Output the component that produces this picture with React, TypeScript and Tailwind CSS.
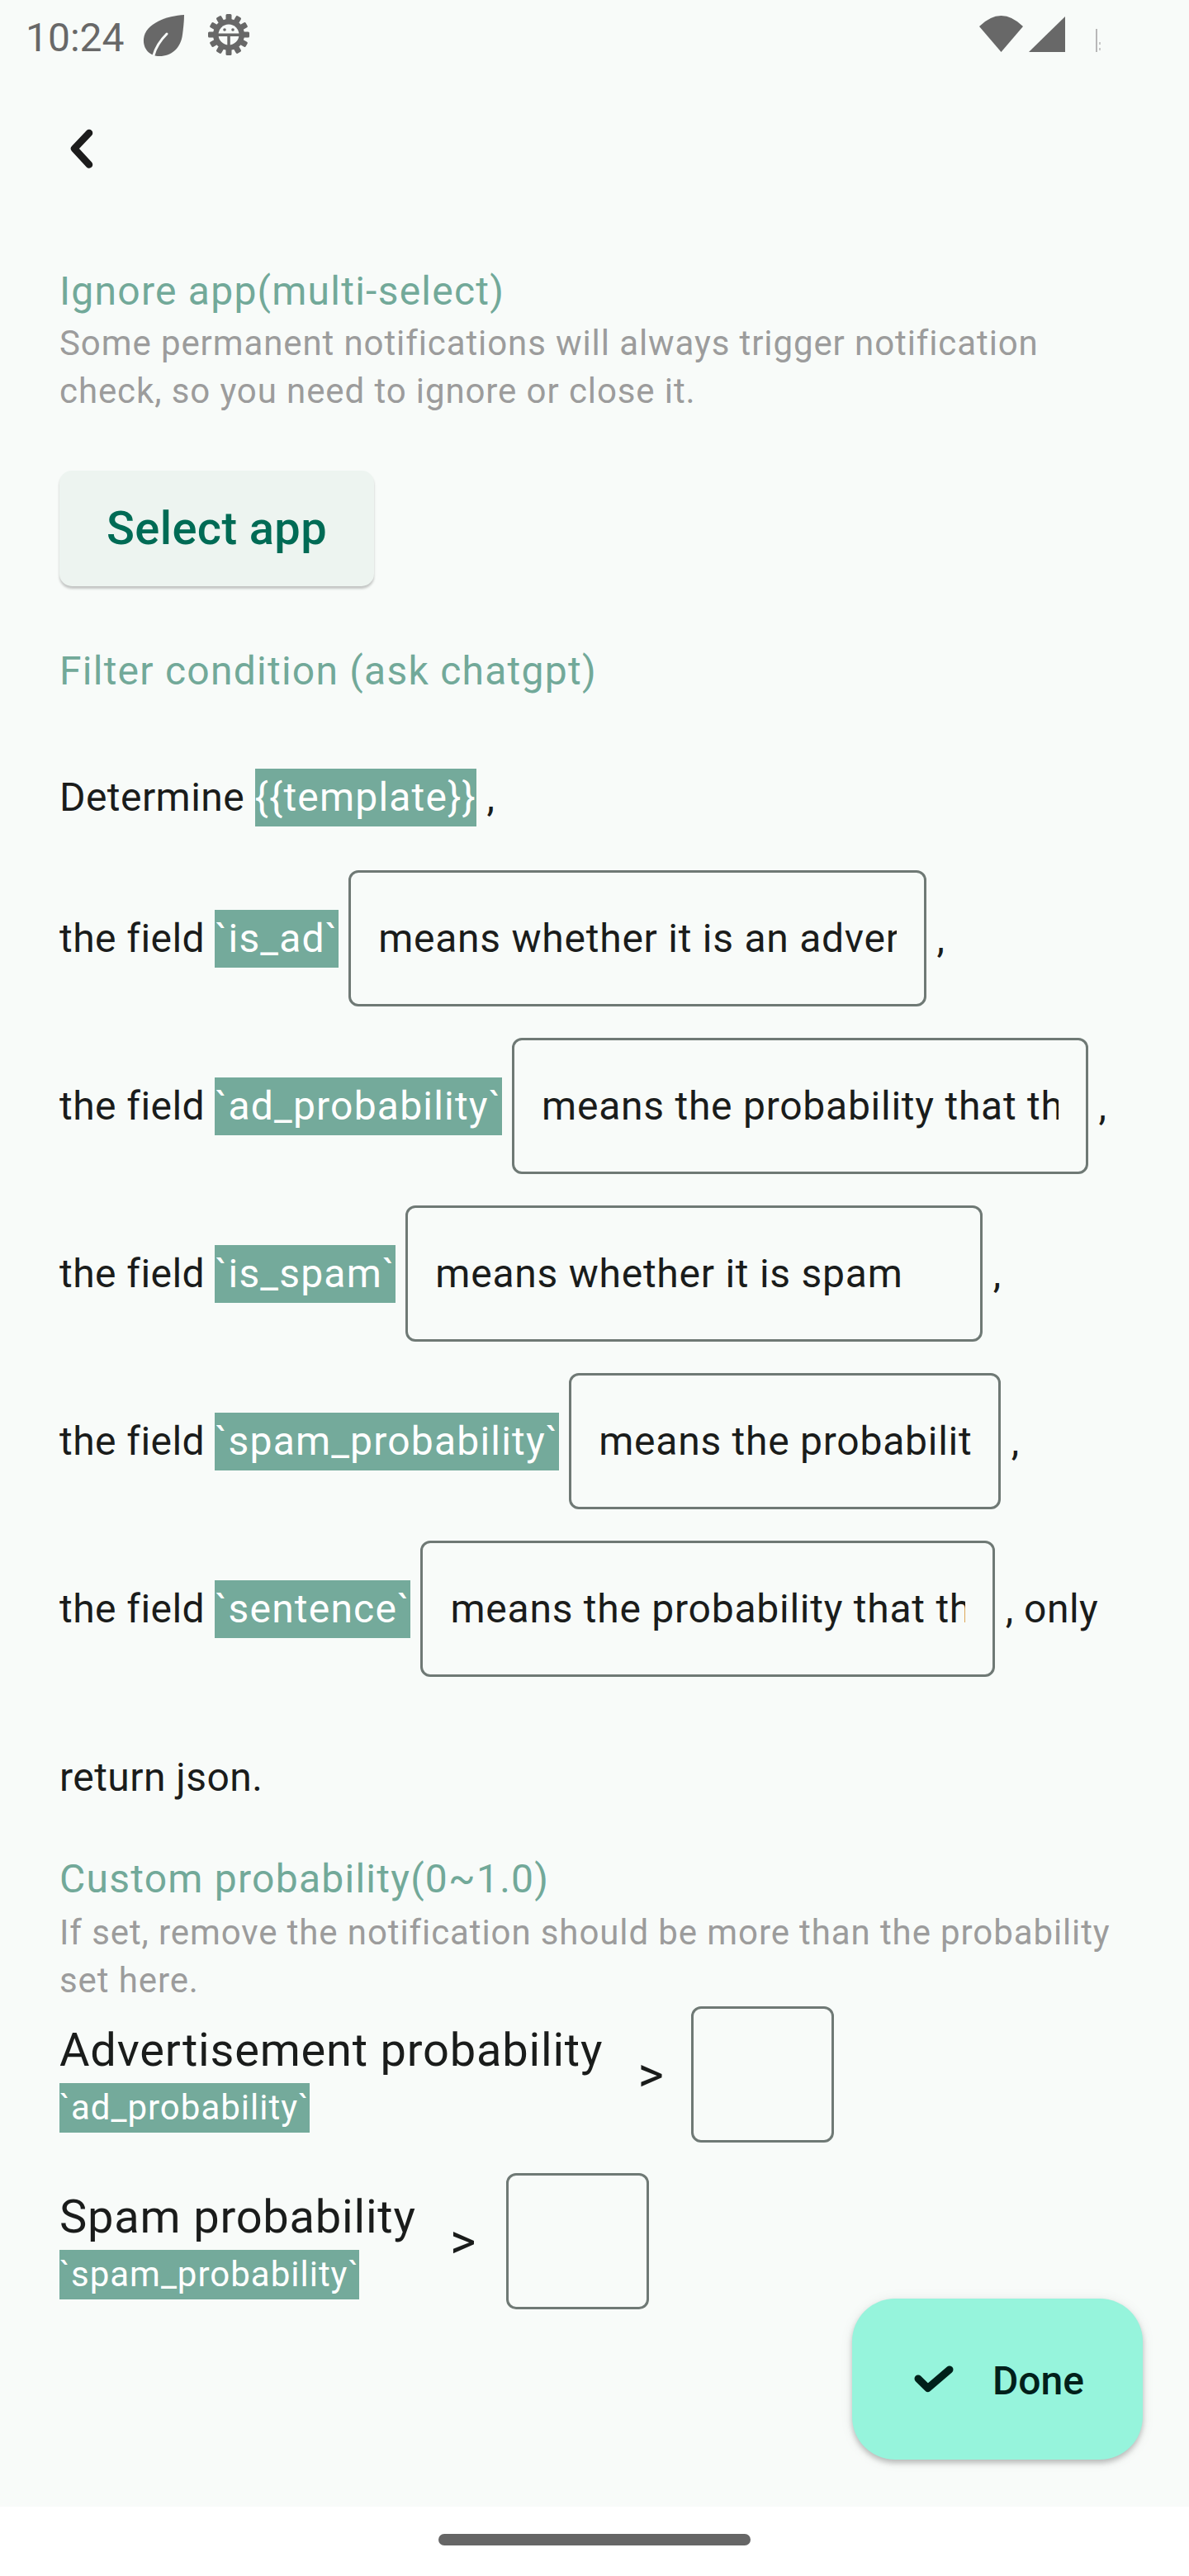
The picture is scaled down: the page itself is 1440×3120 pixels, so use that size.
import React from "react";

// Filter settings screen: ignore apps + chatgpt filter prompt + probability thresholds

function Tag({ children, className = "" }: { children: React.ReactNode; className?: string }) {
  return <span className={`inline-block whitespace-pre bg-[#74aa9b] text-white ${className}`}>{children}</span>;
}

function StatusBar() {
  return (
    <div className="flex h-[96px] shrink-0 items-start px-[31px]">
      <span className="mt-[22px] text-[48px] leading-[48px] text-[#686868]">10:24</span>
      {/* leaf */}
      <svg className="ml-[22px] mt-[17px]" width="52" height="52" viewBox="0 0 52 52">
        <path d="M50 1 C30 2 3 11 1 30 C0 43 9 51 20 51 C35 51 46 41 48 25 C49 17 50 9 50 1 Z" fill="#686868" />
        <path d="M13 50 C16 39 22 31 29 24" stroke="#f8fbf9" strokeWidth="3" fill="none" strokeLinecap="round" />
      </svg>
      {/* debug gear */}
      <svg className="ml-[26px] mt-[16px]" width="52" height="52" viewBox="0 0 52 52">
        <g fill="#686868">
          {[0, 30, 60, 90, 120, 150, 180, 210, 240, 270, 300, 330].map((a) => (
            <rect key={a} x="22.5" y="1" width="7" height="10" rx="1.5" transform={`rotate(${a} 26 26)`} />
          ))}
          <circle cx="26" cy="26" r="19" />
        </g>
        <circle cx="26" cy="26" r="12.5" fill="#f8fbf9" />
        <rect x="13" y="24.5" width="26" height="3.5" fill="#686868" />
        <rect x="24.3" y="26" width="3.5" height="13" fill="#686868" />
        <circle cx="21" cy="20" r="1.8" fill="#686868" />
        <circle cx="31" cy="20" r="1.8" fill="#686868" />
      </svg>
      <div className="flex-1" />
      {/* wifi */}
      <svg className="mt-[16px]" width="58" height="50" viewBox="0 0 58 50">
        <path d="M2 16 Q28.5 -10 55 16 L28.5 47 Z" fill="#686868" />
      </svg>
      {/* signal */}
      <svg className="ml-[2px] mt-[18px]" width="48" height="48" viewBox="0 0 48 48">
        <path d="M2 45 L46 2 L46 45 Z" fill="#686868" />
      </svg>
      {/* battery, nearly empty */}
      <svg className="ml-[34px] mt-[33px]" width="16" height="32" viewBox="0 0 16 32">
        <rect x="1" y="2" width="2" height="28" fill="#b8b8b8" />
        <rect x="5" y="18" width="2" height="3" fill="#c8c8c8" />
        <rect x="5" y="25" width="2" height="3" fill="#c8c8c8" />
      </svg>
      <div className="w-[67px]" />
    </div>
  );
}

function FieldRow({
  field,
  text,
  boxWidth,
  tail,
  spacing,
}: {
  field: string;
  text: string;
  boxWidth: string;
  tail: string;
  spacing: string;
}) {
  return (
    <div className={`flex items-center text-[48px] tracking-[0.45px] text-[#1a1c1b] ${spacing}`}>
      <span className="whitespace-pre">the field </span>
      <Tag className="leading-[70px] tracking-[1.2px]">{field}</Tag>
      <span className="whitespace-pre"> </span>
      <div className={`flex h-[165px] shrink-0 items-center rounded-[12px] border-[3px] border-[#6f7975] px-[33px] ${boxWidth}`}>
        <div className="w-full overflow-hidden whitespace-nowrap tracking-[0.75px]">{text}</div>
      </div>
      <span className="whitespace-pre"> {tail}</span>
    </div>
  );
}

function ProbRow({ label, field, spacing, gapA, gapB }: { label: string; field: string; spacing: string; gapA: string; gapB: string }) {
  return (
    <div className={`flex items-center ${spacing}`}>
      <div className="flex flex-col items-start">
        <span className="text-[56px] leading-[80px] tracking-[0.8px] text-[#1a1c1b]">{label}</span>
        <Tag className="text-[42px] leading-[60px] tracking-[1px]">{field}</Tag>
      </div>
      <span className={`w-[32px] text-center text-[60px] leading-[60px] text-[#1a1c1b] ${gapA}`}>&gt;</span>
      <div className={`h-[165px] w-[173px] rounded-[12px] border-[3px] border-[#6f7975] ${gapB}`} />
    </div>
  );
}

const rows = [
  { field: "`is_ad`", text: "means whether it is an advertisement", boxWidth: "w-[700px]", tail: ",", spacing: "mt-[53px]" },
  { field: "`ad_probability`", text: "means the probability that the notification is an advertisement", boxWidth: "w-[698px]", tail: ",", spacing: "mt-[38px]" },
  { field: "`is_spam`", text: "means whether it is spam", boxWidth: "w-[699px]", tail: ",", spacing: "mt-[38px]" },
  { field: "`spam_probability`", text: "means the probability that the notification is spam", boxWidth: "w-[523px]", tail: ",", spacing: "mt-[38px]" },
  { field: "`sentence`", text: "means the probability that the sentence is meaningful", boxWidth: "w-[696px]", tail: ", only", spacing: "mt-[38px]" },
];

export default function App() {
  return (
    <div className="relative flex h-[3120px] w-full flex-col bg-[#f8fbf9] font-['Roboto',sans-serif]">
      <StatusBar />

      {/* App bar */}
      <div className="flex h-[168px] shrink-0 items-center pl-[80px]">
        <svg width="40" height="56" viewBox="0 0 40 56">
          <path d="M28 9 L10 28 L28 47.5" stroke="#1c1c1c" strokeWidth="8.5" fill="none" strokeLinecap="round" strokeLinejoin="round" />
        </svg>
      </div>

      <main className="flex-1 px-[72px]">
        <div className="mt-[61px] text-[48px] leading-[56px] tracking-[1.25px] text-[#72a999]">Ignore app(multi-select)</div>
        <div className="mt-[6px] text-[42px] leading-[58px] tracking-[0.9px] text-[#9c9c9c]">
          Some permanent notifications will always trigger notification check, so you need to ignore or close it.
        </div>

        <button className="mt-[67px] flex h-[140px] items-center rounded-[15px] bg-[#edf4f0] px-[57px] text-[56px] font-medium tracking-[0.4px] text-[#006b55] shadow-[0_3px_3px_rgba(0,0,0,0.22)]">
          Select app
        </button>

        <div className="mt-[75px] text-[48px] leading-[56px] tracking-[1.25px] text-[#72a999]">Filter condition (ask chatgpt)</div>

        <div className="mt-[90px] whitespace-pre text-[48px] leading-[70px] tracking-[0.45px] text-[#1a1c1b]">
          Determine <Tag className="tracking-[1.2px]">{"{{template}}"}</Tag> ,
        </div>

        {rows.map((r) => (
          <FieldRow key={r.field} {...r} />
        ))}

        <div className="mt-[87px] text-[48px] leading-[70px] tracking-[0.45px] text-[#1a1c1b]">return json.</div>

        <div className="mt-[60px] text-[48px] leading-[56px] tracking-[1.25px] text-[#72a999]">Custom probability(0~1.0)</div>
        <div className="mt-[8px] text-[42px] leading-[58px] tracking-[0.9px] text-[#9c9c9c]">
          If set, remove the notification should be more than the probability set here.
        </div>

        <ProbRow label="Advertisement probability" field="`ad_probability`" spacing="mt-[2px]" gapA="ml-[42px]" gapB="ml-[33px]" />
        <ProbRow label="Spam probability" field="`spam_probability`" spacing="mt-[37px]" gapA="ml-[41px]" gapB="ml-[36px]" />
      </main>

      {/* Nav bar */}
      <div className="flex h-[84px] shrink-0 justify-center bg-white pt-[33px]">
        <div className="h-[14px] w-[378px] rounded-full bg-[#666666]" />
      </div>

      {/* Done FAB */}
      <button className="absolute right-[56px] top-[2784px] flex h-[195px] w-[352px] items-center rounded-[52px] bg-[#96f4dc] pl-[70px] shadow-[0_4px_6px_rgba(0,0,0,0.22),0_2px_16px_rgba(0,0,0,0.08)]">
        <svg width="56" height="40" viewBox="0 0 56 40">
          <path d="M10 19 L21.7 30.5 L48 8" stroke="#00201a" strokeWidth="9" fill="none" strokeLinecap="round" strokeLinejoin="round" />
        </svg>
        <span className="ml-[44px] mt-[4px] text-[48px] font-medium text-[#00201a]">Done</span>
      </button>
    </div>
  );
}
